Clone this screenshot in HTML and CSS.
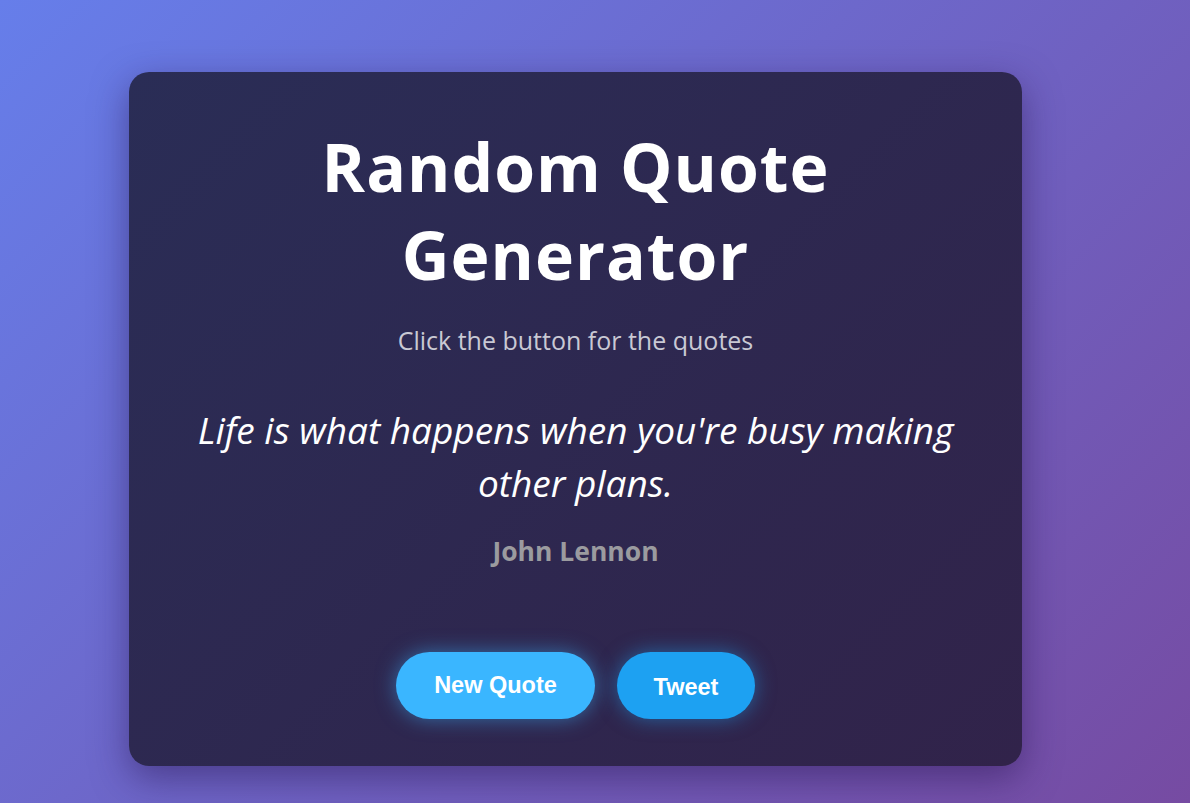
FILE: index.html
```html
<!DOCTYPE html>
<html lang="en">
<head>
<meta charset="utf-8">
<title>Random Quote Generator</title>
<link rel="stylesheet" href="styles.css">
</head>
<body>
<main class="card">
  <h1 class="title">Random Quote Generator</h1>
  <p class="subtitle">Click the button for the quotes</p>
  <blockquote class="quote">Life is what happens when you're busy making other plans.</blockquote>
  <p class="author">John Lennon</p>
  <div class="actions">
    <button class="btn btn-new">New Quote</button>
    <button class="btn btn-tweet">Tweet</button>
  </div>
</main>
</body>
</html>
```
FILE: styles.css
```css
html, body {
  margin: 0;
  height: 100%;
}
body {
  background: linear-gradient(135deg, #667eea 0%, #764ba2 100%);
  font-family: "Open Sans", "Noto Sans", sans-serif;
  padding: 72px 0 0 129px;
  box-sizing: border-box;
  overflow: hidden;
}
.card {
  width: 893px;
  height: 694px;
  box-sizing: border-box;
  border-radius: 20px;
  background: linear-gradient(135deg, #2a2d56 0%, #31234a 100%);
  box-shadow: 0 12px 36px rgba(40, 20, 80, 0.5);
  display: flex;
  flex-direction: column;
  align-items: center;
  text-align: center;
  padding: 50px 40px 0;
}
.title {
  margin: 0;
  color: #fff;
  font-size: 66px;
  line-height: 88px;
  font-weight: 700;
  letter-spacing: 1px;
  width: 560px;
}
.subtitle {
  margin: 25px 0 0;
  color: #c9c9d4;
  font-size: 25px;
  line-height: 34px;
}
.quote {
  margin: 46px 0 0;
  color: #fff;
  font-style: italic;
  font-size: 37px;
  line-height: 53px;
  width: 800px;
}
.author {
  margin: 24px 0 0;
  color: #9b9b9f;
  font-size: 26.5px;
  font-weight: 700;
  line-height: 36px;
}
.actions {
  display: flex;
  gap: 22px;
  margin-top: 83px;
}
.btn {
  border: none;
  height: 67px;
  border-radius: 34px;
  color: #fff;
  font-family: "Liberation Sans", Arial, sans-serif;
  font-weight: 700;
  font-size: 23.5px;
  cursor: pointer;
}
.btn-new {
  width: 199px;
  background: #3ab6ff;
  box-shadow: 0 0 20px rgba(58, 182, 255, 0.5);
}
.btn-tweet {
  width: 138px;
  background: #1da1f2;
  box-shadow: 0 0 20px rgba(29, 161, 242, 0.5);
  padding-top: 4px;
}
```
